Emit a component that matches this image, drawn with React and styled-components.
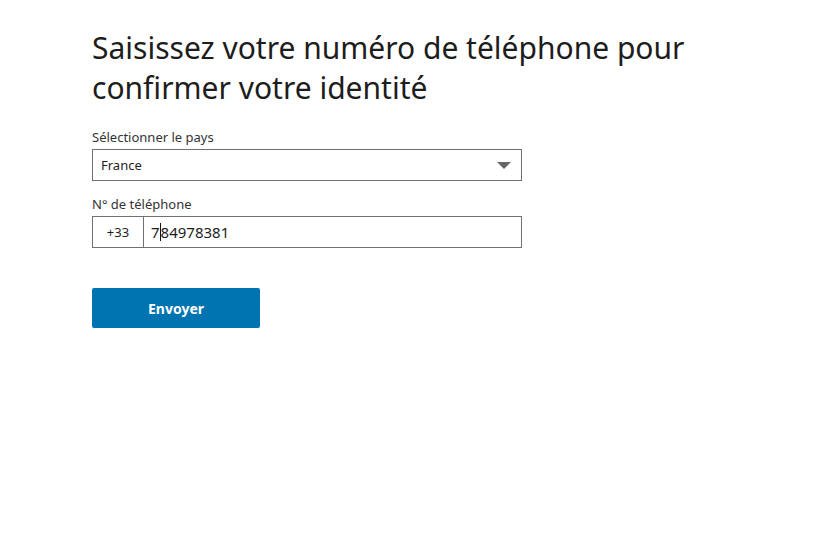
import styled, { createGlobalStyle } from 'styled-components';

const GlobalStyle = createGlobalStyle`
  html, body {
    margin: 0;
    padding: 0;
    background: #fff;
  }
  body {
    font-family: "Noto Sans", "Open Sans", sans-serif;
    color: #1a1a1a;
  }
`

const App = () => {
  return (
    <>
      <GlobalStyle />
      <Page>
        <Form>
          <Title>Saisissez votre numéro de téléphone pour confirmer votre identité</Title>
          <Field>
            <Label>Sélectionner le pays</Label>
            <SelectBox>
              <span>France</span>
              <Arrow />
            </SelectBox>
          </Field>
          <Field $gap="14px">
            <Label>N° de téléphone</Label>
            <PhoneRow>
              <Prefix>+33</Prefix>
              <NumberBox>7<Caret />84978381</NumberBox>
            </PhoneRow>
          </Field>
          <SendButton type="submit">Envoyer</SendButton>
        </Form>
      </Page>
    </>
  )
}

const Page = styled.div`
  width: 822px;
  height: 560px;
  padding: 28px 0 0 92px;
  box-sizing: border-box;
`

const Form = styled.div`
  width: 430px;
  display: flex;
  flex-direction: column;
`

const Title = styled.h1`
  width: 640px;
  margin: 0 0 14px;
  font-size: 30px;
  font-weight: 400;
  line-height: 40px;
  color: #1d1d1d;
`

const Field = styled.div`
  display: flex;
  flex-direction: column;
  margin-top: ${p => p.$gap || '6px'};
`

const Label = styled.label`
  font-size: 13px;
  line-height: 18px;
  color: #333;
  margin-bottom: 3px;
`

const SelectBox = styled.div`
  height: 32px;
  box-sizing: border-box;
  border: 1px solid #707070;
  display: flex;
  align-items: center;
  justify-content: space-between;
  padding: 0 10px 0 8px;
  font-size: 13px;
  color: #1d1d1d;
`

const Arrow = styled.span`
  width: 0;
  height: 0;
  border-left: 7px solid transparent;
  border-right: 7px solid transparent;
  border-top: 7px solid #666;
`

const PhoneRow = styled.div`
  height: 32px;
  box-sizing: border-box;
  border: 1px solid #707070;
  display: flex;
`

const Prefix = styled.div`
  width: 50px;
  border-right: 1px solid #707070;
  display: flex;
  align-items: center;
  justify-content: center;
  font-size: 13px;
  color: #1d1d1d;
`

const NumberBox = styled.div`
  flex: 1;
  display: flex;
  align-items: center;
  padding-left: 7px;
  font-size: 15px;
  color: #1d1d1d;
`

const Caret = styled.span`
  display: inline-block;
  width: 1px;
  height: 18px;
  background: #111;
`

const SendButton = styled.button`
  margin-top: 40px;
  width: 168px;
  height: 40px;
  border: none;
  border-radius: 2px;
  background: #0073b1;
  color: #fff;
  font-family: inherit;
  font-size: 14px;
  font-weight: 700;
  cursor: pointer;
`

export default App;
